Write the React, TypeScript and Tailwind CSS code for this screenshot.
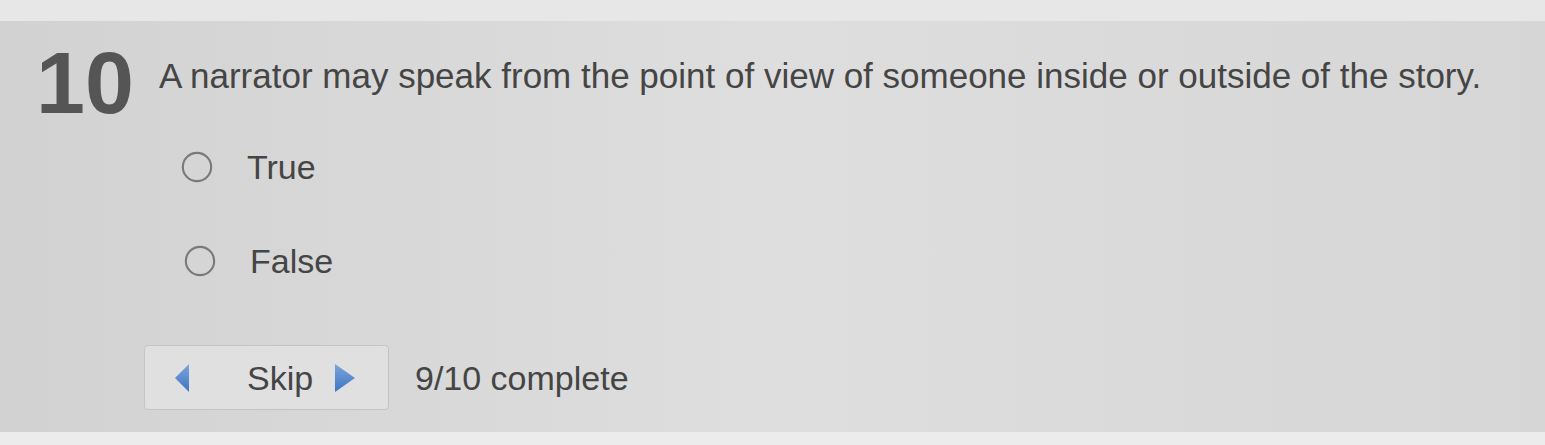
import { Circle } from "lucide-react";

type Option = { id: string; label: string };

const options: Option[] = [
  { id: "true", label: "True" },
  { id: "false", label: "False" },
];

function Arrow({ dir }: { dir: "left" | "right" }) {
  const points = dir === "left" ? "14,0 14,28 0,14" : "0,0 0,28 20,14";
  return (
    <svg width={dir === "left" ? 14 : 20} height="28" viewBox={dir === "left" ? "0 0 14 28" : "0 0 20 28"} aria-hidden="true">
      <defs>
        <linearGradient id={`arrow-${dir}`} x1="0" y1="0" x2="0" y2="1">
          <stop offset="0" stopColor="#7aa6dc" />
          <stop offset="1" stopColor="#3f74c2" />
        </linearGradient>
      </defs>
      <polygon points={points} fill={`url(#arrow-${dir})`} />
    </svg>
  );
}

export default function App() {
  return (
    <div className="flex h-[445px] w-full flex-col font-['Liberation_Sans',Arial,sans-serif] text-[#454545]">
      <div className="h-[21px] bg-[#e7e7e7]" />

      <section className="flex flex-1 flex-col bg-linear-to-r from-[#d2d2d2] via-[#dedede] to-[#d6d6d6] pl-[36px]">
        <div className="mt-[18px] flex items-start">
          <span className="text-[88px] font-bold leading-none text-[#555555]">10</span>
          <p className="ml-[25px] mt-[16px] text-[35px] leading-[42px]">
            A narrator may speak from the point of view of someone inside or outside of the story.
          </p>
        </div>

        <div className="ml-[144px] mt-[20px] flex flex-col gap-[54px]">
          {options.map((opt, i) => (
            <label key={opt.id} className={`flex items-center gap-[33px] ${i === 1 ? "ml-[3px]" : ""}`}>
              <Circle size={34} strokeWidth={1.5} className="text-[#7a7a7a]" />
              <span className="text-[34px] leading-[40px]">{opt.label}</span>
            </label>
          ))}
        </div>

        <div className="mt-[64px] flex items-center">
          <button className="ml-[108px] flex h-[65px] w-[245px] items-center rounded-[4px] border border-[#c4c4c4] bg-[#e0e0e0] pl-[30px]">
            <Arrow dir="left" />
            <span className="ml-[58px] text-[34px] leading-none">Skip</span>
            <span className="ml-[22px] flex">
              <Arrow dir="right" />
            </span>
          </button>
          <span className="ml-[26px] text-[34px] leading-none">9/10 complete</span>
        </div>
      </section>

      <div className="h-[13px] bg-[#ececec]" />
    </div>
  );
}
